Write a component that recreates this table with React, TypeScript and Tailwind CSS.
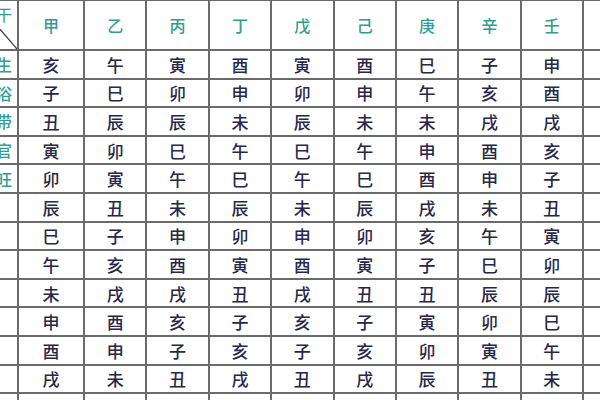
import React from "react";

const stems = ["甲", "乙", "丙", "丁", "戊", "己", "庚", "辛", "壬"];
const stages = ["长生", "沐浴", "冠带", "临官", "帝旺"];
const rows: string[][] = [
  ["亥", "午", "寅", "酉", "寅", "酉", "巳", "子", "申"],
  ["子", "巳", "卯", "申", "卯", "申", "午", "亥", "酉"],
  ["丑", "辰", "辰", "未", "辰", "未", "未", "戌", "戌"],
  ["寅", "卯", "巳", "午", "巳", "午", "申", "酉", "亥"],
  ["卯", "寅", "午", "巳", "午", "巳", "酉", "申", "子"],
  ["辰", "丑", "未", "辰", "未", "辰", "戌", "未", "丑"],
  ["巳", "子", "申", "卯", "申", "卯", "亥", "午", "寅"],
  ["午", "亥", "酉", "寅", "酉", "寅", "子", "巳", "卯"],
  ["未", "戌", "戌", "丑", "戌", "丑", "丑", "辰", "辰"],
  ["申", "酉", "亥", "子", "亥", "子", "寅", "卯", "巳"],
  ["酉", "申", "子", "亥", "子", "亥", "卯", "寅", "午"],
  ["戌", "未", "丑", "戌", "丑", "戌", "辰", "丑", "未"],
];

export default function App() {
  return (
    <div className="w-[600px] h-[400px] overflow-hidden bg-white font-['Noto_Sans_CJK_SC','Noto_Sans_CJK_TC',sans-serif]">
      <div className="grid h-[400px] pt-[1px] gap-[2px] bg-[#6a6a6a] grid-cols-[17px_64px_repeat(8,minmax(0,1fr))_16px] grid-rows-[48px_repeat(12,26.6px)_1fr]">
        <div className="relative bg-white overflow-hidden flex justify-end items-start pr-[5px] pt-[3px]">
          <span className="whitespace-nowrap text-[16px] leading-[20px] text-[#2f9d92]">天干</span>
          <svg className="absolute left-0 top-0" width="17" height="48" viewBox="0 0 17 48">
            <line x1="-2" y1="26" x2="17" y2="48" stroke="#444" strokeWidth="1.3" />
          </svg>
        </div>
        {stems.map((s) => (
          <div key={s} className="bg-white flex items-center justify-center">
            <span className="text-[16px] leading-none font-medium text-[#2f9d92]">{s}</span>
          </div>
        ))}
        <div className="bg-white" />
        {rows.map((r, ri) => (
          <React.Fragment key={ri}>
            <div className="bg-white overflow-hidden flex items-center justify-end">
              {ri < 5 ? (
                <span className="whitespace-nowrap text-[16px] leading-none font-medium text-[#2f9d92] pr-[5px]">
                  {stages[ri]}
                </span>
              ) : null}
            </div>
            {r.map((c, ci) => (
              <div key={ci} className="bg-white flex items-center justify-center">
                <span className="text-[17px] leading-none font-medium text-[#27274a]">{c}</span>
              </div>
            ))}
            <div className="bg-white" />
          </React.Fragment>
        ))}
        {Array.from({ length: 11 }).map((_, i) => (
          <div key={"b" + i} className="bg-white" />
        ))}
      </div>
    </div>
  );
}
